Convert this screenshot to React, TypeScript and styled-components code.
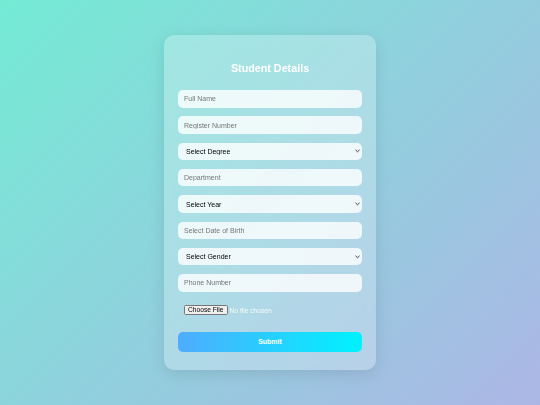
import React from 'react';
import styled, { createGlobalStyle } from 'styled-components';

const GlobalStyle = createGlobalStyle`
  * {
    box-sizing: border-box;
  }

  body {
    margin: 0;
    font-family: "Liberation Sans", Arial, sans-serif;
  }
`;

const chevron = encodeURIComponent(
  '<svg xmlns="http://www.w3.org/2000/svg" width="10" height="8" viewBox="0 0 10 8"><path d="M1.5 2.2 L5 5.6 L8.5 2.2" fill="none" stroke="#3a3a3a" stroke-width="2" stroke-linecap="round" stroke-linejoin="round"/></svg>'
);

const Page = styled.div`
  zoom: 0.5;
  width: 1080px;
  height: 810px;
  display: flex;
  align-items: center;
  justify-content: center;
  background: linear-gradient(135deg, #74ebd5, #acb6e5);
`;

const Card = styled.form`
  width: 424px;
  padding: 40px 28px 36px;
  border-radius: 20px;
  background: rgba(255, 255, 255, 0.25);
  backdrop-filter: blur(10px);
  box-shadow: 0 8px 32px rgba(0, 0, 0, 0.1);
  display: flex;
  flex-direction: column;
  gap: 17.6px;
`;

const Title = styled.h2`
  margin: 0;
  text-align: center;
  color: #fff;
  font-size: 21.5px;
  font-weight: bold;
  line-height: 52px;
`;

const fieldBase = `
  width: 100%;
  height: 35px;
  padding: 0 12px;
  border: none;
  border-radius: 10px;
  background-color: rgba(255, 255, 255, 0.8);
  font-family: "Liberation Sans", Arial, sans-serif;
  font-size: 14px;
  outline: none;
`;

const TextInput = styled.input`
  ${fieldBase}
  color: #333;

  &::placeholder {
    color: #757575;
  }
`;

const Select = styled.select`
  ${fieldBase}
  appearance: none;
  padding-left: 16px;
  color: #000;
  background-image: url("data:image/svg+xml,${chevron}");
  background-repeat: no-repeat;
  background-position: right 5px center;
  background-size: 10px 8px;
`;

const FileInput = styled.input`
  width: 100%;
  padding: 9px 12px 17px;
  border: none;
  font-family: "Liberation Sans", Arial, sans-serif;
  font-size: 13.33px;
  color: rgba(255, 255, 255, 0.85);
`;

const SubmitButton = styled.button`
  width: 100%;
  height: 39px;
  border: none;
  border-radius: 10px;
  background: linear-gradient(90deg, #4facfe, #00f2fe);
  color: #fff;
  font-family: "Liberation Sans", Arial, sans-serif;
  font-size: 14px;
  font-weight: bold;
  cursor: pointer;
`;

export default function App() {
  return (
    <Page>
      <GlobalStyle />
      <Card onSubmit={(e) => e.preventDefault()}>
        <Title>Student Details</Title>
        <TextInput type="text" placeholder="Full Name" />
        <TextInput type="text" placeholder="Register Number" />
        <Select defaultValue="">
          <option value="">Select Degree</option>
          <option>B.E</option>
          <option>B.Tech</option>
        </Select>
        <TextInput type="text" placeholder="Department" />
        <Select defaultValue="">
          <option value="">Select Year</option>
          <option>I</option>
          <option>II</option>
        </Select>
        <TextInput type="text" placeholder="Select Date of Birth" />
        <Select defaultValue="">
          <option value="">Select Gender</option>
          <option>Male</option>
          <option>Female</option>
        </Select>
        <TextInput type="text" placeholder="Phone Number" />
        <FileInput type="file" />
        <SubmitButton type="submit">Submit</SubmitButton>
      </Card>
    </Page>
  );
}
